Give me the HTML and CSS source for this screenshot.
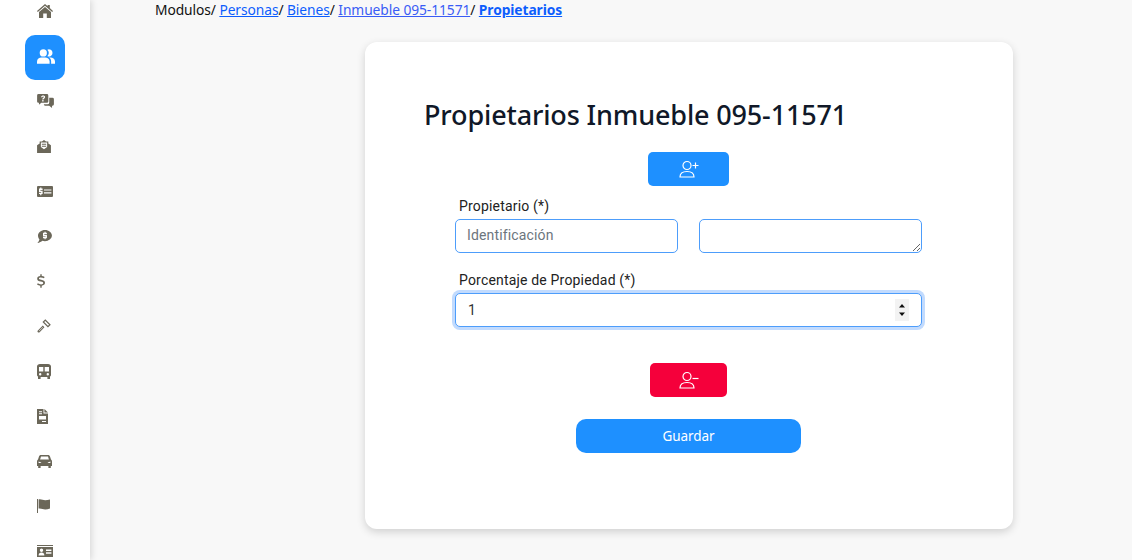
FILE: index.html
```html
<!DOCTYPE html>
<html lang="en">
<head>
    <meta charset="UTF-8">
    <title>Propietarios</title>
    <link rel="stylesheet" href="styles.css">
</head>
<body>
    <nav class="sidebar">
        <div class="side-list">
            <a class="side-item"><svg viewBox="0 0 16 14" width="16" height="14"><path d="M8 0 L10.6 2.2 V1 H12.8 V4.1 L16 6.9 L15.2 7.9 L8 1.8 L.8 7.9 L0 6.9 Z M8 3 L14 8 V14 H9.8 V9.6 H6.2 V14 H2 V8 Z"/></svg></a>
            <a class="side-item active"><svg viewBox="0 0 20 16" width="18" height="15"><circle cx="7" cy="4" r="4"/><path d="M0 16 V13.5 C0 10.5 2.5 9 5 9 H9 C11.5 9 14 10.5 14 13.5 V16 Z"/><path d="M11.5 7.6 A4 4 0 1 0 11.5 .4 A5.4 5.4 0 0 1 11.5 7.6 Z"/><path d="M13 9 C15 9.4 15.7 11.5 15.7 13.5 V16 H20 V13.5 C20 10.5 17.5 9 15 9 Z"/></svg></a>
            <a class="side-item"><svg viewBox="0 0 18 15" width="17" height="14"><path fill-rule="evenodd" d="M1.5 0 H10.5 A1.5 1.5 0 0 1 12 1.5 V8 A1.5 1.5 0 0 1 10.5 9.5 H4.5 L2 11.5 V9.5 H1.5 A1.5 1.5 0 0 1 0 8 V1.5 A1.5 1.5 0 0 1 1.5 0 Z M4.2 3.6 H5.6 C5.6 2.4 7.2 2.4 7.2 3.3 C7.2 4 5.5 4.3 5.5 5.8 H6.9 C6.9 4.9 8.6 4.6 8.6 3.2 C8.6 1 4.2 1 4.2 3.6 Z M5.5 6.5 V8 H6.9 V6.5 Z"/><path d="M13 4 H16.5 A1.5 1.5 0 0 1 18 5.5 V11 A1.5 1.5 0 0 1 16.5 12.5 H16 V15 L13 12.5 H8.5 A1.5 1.5 0 0 1 7.2 11 H11 A2 2 0 0 0 13 9 Z"/></svg></a>
            <a class="side-item"><svg viewBox="0 0 16 15" width="14" height="13"><path fill-rule="evenodd" d="M8 0 L10.4 1.7 H13 V4 L16 6 V15 H0 V6 L3 4 V1.7 H5.6 Z M4.4 3 V8.2 L8 10.6 L11.6 8.2 V3 Z"/><path d="M5.5 4.4 H10.5 V5.6 H5.5 Z M5.5 6.6 H10.5 V7.8 H5.5 Z"/></svg></a>
            <a class="side-item"><svg viewBox="0 0 16 11" width="16" height="11"><path fill-rule="evenodd" d="M1 0 H15 A1 1 0 0 1 16 1 V10 A1 1 0 0 1 15 11 H1 A1 1 0 0 1 0 10 V1 A1 1 0 0 1 1 0 Z M3.2 1.6 V2.6 H2 V6 H4.2 V6.8 H2 V8 H3.2 V9.2 H4.4 V8 H5.6 V4.8 H3.4 V3.9 H5.6 V2.6 H4.4 V1.6 Z M7 3.4 V4.6 H14.4 V3.4 Z M7 6.2 V7.4 H14.4 V6.2 Z"/></svg></a>
            <a class="side-item"><svg viewBox="0 0 16 14" width="15" height="13"><path fill-rule="evenodd" d="M8.5 0 C12.6 0 16 2.7 16 6 C16 9.3 12.6 12 8.5 12 C7.5 12 6.6 11.8 5.7 11.5 C4.6 12.5 2.6 13.6 .4 14 C1.6 12.8 2.3 11.4 2.5 10 C1.5 8.9 1 7.5 1 6 C1 2.7 4.4 0 8.5 0 Z M8 2 V3 H6.4 V6.6 H9.2 V7.4 H6.4 V8.8 H8 V10 H9.2 V8.8 H10.6 V5.2 H7.8 V4.4 H10.6 V3 H9.2 V2 Z"/></svg></a>
            <a class="side-item"><svg viewBox="0 0 9 15" width="8" height="14"><path d="M3.7 0 H5.3 V2 C6.6 2.1 7.8 2.5 8.6 3.1 L7.8 4.5 C6.8 3.9 5.5 3.5 4.2 3.5 C3 3.5 2.2 3.9 2.2 4.7 C2.2 5.5 3 5.8 4.8 6.2 C7.2 6.7 9 7.4 9 9.6 C9 11.5 7.5 12.6 5.3 12.9 V15 H3.7 V12.9 C2.3 12.8 1 12.3 0 11.5 L.9 10.1 C2 10.9 3.2 11.4 4.6 11.4 C6 11.4 7 10.9 7 9.8 C7 8.9 6.2 8.5 4.3 8.1 C1.9 7.6 .2 6.9 .2 4.9 C.2 3.2 1.6 2.2 3.7 2 Z"/></svg></a>
            <a class="side-item"><svg viewBox="0 0 16 16" width="14" height="14"><path fill-rule="evenodd" d="M9.5 .2 L15.8 6.5 L12.5 9.8 L6.2 3.5 Z M9.5 2.2 L8.2 3.5 L12.5 7.8 L13.8 6.5 Z"/><path fill-rule="evenodd" d="M6.6 7.5 L8.5 9.4 L3 15 A1.4 1.4 0 0 1 1 15 L1 15 A1.4 1.4 0 0 1 1 13 Z M6.6 9 L2 13.7 L2.4 14.1 L7 9.4 Z"/></svg></a>
            <a class="side-item"><svg viewBox="0 0 14 15" width="14" height="15"><path fill-rule="evenodd" d="M3 0 H11 C12.7 0 14 1.2 14 2.6 V11 C14 11.7 13.6 12.3 13 12.6 V15 H10.4 V13 H3.6 V15 H1 V12.6 C.4 12.3 0 11.7 0 11 V2.6 C0 1.2 1.3 0 3 0 Z M2 3 V7.5 H6.3 V3 Z M7.7 3 V7.5 H12 V3 Z M3.2 9 A1.2 1.2 0 1 0 3.2 11.4 A1.2 1.2 0 1 0 3.2 9 Z M10.8 9 A1.2 1.2 0 1 0 10.8 11.4 A1.2 1.2 0 1 0 10.8 9 Z"/></svg></a>
            <a class="side-item"><svg viewBox="0 0 11 15" width="11" height="15"><path fill-rule="evenodd" d="M0 0 H6.5 V4.5 H11 V15 H0 Z M2 7 V10.5 H9 V7 Z M2 2.2 V3.2 H5 V2.2 Z M2 4.2 V5.2 H5 V4.2 Z M5 12 V13 H9 V12 Z"/><path d="M7.4 0 L11 3.6 H7.4 Z"/></svg></a>
            <a class="side-item"><svg viewBox="0 0 15 13" width="15" height="13"><path fill-rule="evenodd" d="M4 0 H11 C12 0 12.7 .6 13 1.4 L14 4.6 C14.6 5 15 5.6 15 6.4 V11 H13.8 V13 H11.4 V11 H3.6 V13 H1.2 V11 H0 V6.4 C0 5.6 .4 5 1 4.6 L2 1.4 C2.3 .6 3 0 4 0 Z M4 1.6 L3.1 4.4 H11.9 L11 1.6 Z M1.6 6.4 V8 H4.2 V7.4 Z M13.4 6.4 L10.8 7.4 V8 H13.4 Z"/></svg></a>
            <a class="side-item"><svg viewBox="0 0 13 14" width="13" height="14"><path d="M0 0 H1 V14 H0 Z M1.6 .4 C4 -.2 6 1.2 8.2 1.2 C9.6 1.2 11.4 .8 13 .4 V9.4 C11.4 10 9.6 10.4 8.2 10.4 C6 10.4 4 9.2 1.6 9.6 Z"/></svg></a>
            <a class="side-item"><svg viewBox="0 0 16 12" width="16" height="12"><path fill-rule="evenodd" d="M0 0 H16 V1 H0 Z M0 2 H16 V12 H0 Z M4.5 3.6 A1.7 1.7 0 1 0 4.5 7 A1.7 1.7 0 1 0 4.5 3.6 Z M1.6 10.6 H7.4 C7.4 8.8 6.2 7.6 4.5 7.6 C2.8 7.6 1.6 8.8 1.6 10.6 Z M9 4.4 V6 H14.4 V4.4 Z M9 7.2 V8.8 H14.4 V7.2 Z"/></svg></a>
        </div>
    </nav>

    <main class="content">
        <div class="breadcrumb">
            Modulos/ <a href="#">Personas</a>/ <a href="#">Bienes</a>/ <a href="#" class="visited">Inmueble 095-11571</a>/ <a href="#" class="current">Propietarios</a>
        </div>

        <section class="card">
            <h1>Propietarios Inmueble 095-11571</h1>
            <div class="form-box">
                <button class="btn btn-add" type="button">
                    <svg viewBox="0 0 20 18" width="20" height="18"><circle cx="8" cy="5.5" r="4"/><path d="M1 17 C1 12.5 4 11.5 8 11.5 C12 11.5 15 12.5 15 17 Z"/><path d="M13.5 5.5 H19.5 M16.5 2.5 V8.5"/></svg>
                </button>

                <label class="field-label">Propietario (*)</label>
                <div class="owner-row">
                    <input class="field text" type="text" placeholder="Identificación">
                    <textarea class="field"></textarea>
                </div>

                <label class="field-label percent">Porcentaje de Propiedad (*)</label>
                <input class="field number" type="number" value="1" autofocus>

                <button class="btn btn-remove" type="button">
                    <svg viewBox="0 0 20 18" width="20" height="18"><circle cx="8" cy="5.5" r="4"/><path d="M1 17 C1 12.5 4 11.5 8 11.5 C12 11.5 15 12.5 15 17 Z"/><path d="M13.5 7.5 H19.5"/></svg>
                </button>

                <button class="btn btn-save" type="button">Guardar</button>
            </div>
        </section>
    </main>
</body>
</html>
```

FILE: styles.css
```css
html, body {
    height: 100%;
}
body {
    margin: 0;
    display: flex;
    overflow: hidden;
    background: #f8f8f8;
    font-family: "Noto Sans", "Open Sans", sans-serif;
    color: #111;
}
.sidebar {
    width: 90px;
    flex-shrink: 0;
    overflow: hidden;
    background: #fff;
    box-shadow: 2px 0 6px rgba(0, 0, 0, 0.12);
}
.side-list {
    margin-top: -10px;
    display: flex;
    flex-direction: column;
    align-items: center;
}
.side-item {
    width: 40px;
    height: 45px;
    box-sizing: border-box;
    padding: 0 0 3px 12px;
    flex-shrink: 0;
    display: flex;
    align-items: center;
    border-radius: 10px;
    fill: #6b6759;
}
.side-item.active {
    background: #1e90ff;
    fill: #fff;
}
.content {
    flex: 1;
    padding-left: 65px;
}
.breadcrumb {
    height: 42px;
    box-sizing: border-box;
    font-size: 13.8px;
    letter-spacing: -0.08px;
    line-height: 20px;
    color: #111;
}
.breadcrumb a {
    color: #0d5dfd;
}
.breadcrumb a.visited {
    color: #3a5cf5;
}
.breadcrumb a.current {
    font-weight: 700;
}
.card {
    width: 648px;
    height: 487px;
    margin-left: 210px;
    padding: 54px 0 0 59px;
    box-sizing: border-box;
    background: #fff;
    border-radius: 12px;
    box-shadow: 0 3px 8px rgba(0, 0, 0, 0.16);
}
h1 {
    margin: 0;
    font-size: 27px;
    letter-spacing: -0.15px;
    line-height: 37px;
    font-weight: 500;
    color: #101828;
}
.form-box {
    width: 467px;
    margin: 19px 0 0 31px;
    display: flex;
    flex-direction: column;
    font-family: Roboto, sans-serif;
}
.btn {
    height: 34px;
    border: none;
    border-radius: 5px;
    align-self: center;
    display: flex;
    align-items: center;
    justify-content: center;
    color: #fff;
    padding: 0;
}
.btn svg {
    fill: none;
    stroke: #fff;
    stroke-width: 1.2;
}
.btn-add {
    width: 81px;
    background: #1e90ff;
}
.btn-remove {
    width: 77px;
    margin-top: 36px;
    background: #f5003b;
}
.btn-save {
    width: 225px;
    margin-top: 22px;
    border-radius: 10px;
    background: #1e90ff;
    font-family: "Noto Sans", sans-serif;
    font-size: 13.5px;
    letter-spacing: -0.1px;
}
.field-label {
    margin: 11px 0 4px 4px;
    font-size: 14px;
    letter-spacing: 0.18px;
    line-height: 18px;
    color: #222;
}
.field-label.percent {
    margin-top: 18px;
}
.owner-row {
    display: flex;
    justify-content: space-between;
}
.field {
    width: 223px;
    height: 34px;
    box-sizing: border-box;
    margin: 0;
    padding: 0 12px;
    display: block;
    border: 1px solid #4d9dfb;
    border-radius: 5px;
    outline: none;
    background: #fff;
    font-family: Roboto, sans-serif;
    font-size: 14px;
    color: #333;
}
.field.text {
    padding: 0 11px 2px;
    letter-spacing: 0.15px;
}
.field::placeholder {
    color: #6c757d;
}
.number {
    width: 100%;
}
.number:focus {
    box-shadow: 0 0 0 3px #c2dbfe;
}
.number::-webkit-inner-spin-button {
    -webkit-appearance: none;
    appearance: none;
    opacity: 1;
    width: 14px;
    height: 22px;
    background: #f3f3f3 url("data:image/svg+xml,%3Csvg xmlns='http://www.w3.org/2000/svg' width='14' height='22'%3E%3Cpath d='M7 5 L10 8.5 H4 Z M4 13.5 H10 L7 17 Z' fill='%23111'/%3E%3C/svg%3E") no-repeat center;
}
```
